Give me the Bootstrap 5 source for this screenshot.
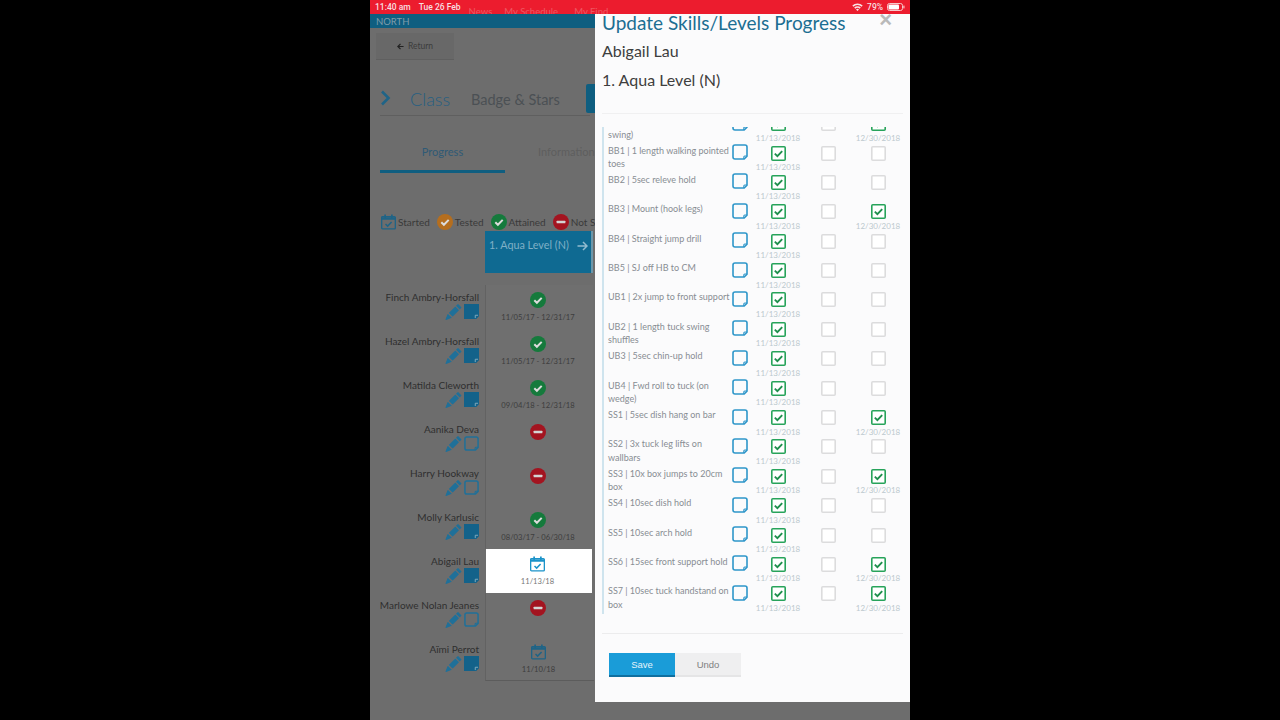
<!DOCTYPE html>
<html lang="en">
<head>
    <meta charset="UTF-8">
    <meta name="viewport" content="width=device-width, initial-scale=1.0">
    <title>Update Skills/Levels Progress</title>
    <link rel="stylesheet" href="https://cdn.jsdelivr.net/npm/bootstrap@5.3.0/dist/css/bootstrap.min.css">
    <script src="https://cdn.jsdelivr.net/npm/bootstrap@5.3.0/dist/js/bootstrap.bundle.min.js"></script>
    <style>
        html, body { height: 720px; overflow: hidden; background: #000; }
        body { font-family: Lato, "Liberation Sans", sans-serif; }
        .tablet { width: 540px; height: 720px; background: #6d6d6d; overflow: hidden; }

        .status-bar { height: 14px; background: #ec1c2e; color: #f7dfe0; font: 500 8.5px/14px Roboto, sans-serif; padding: 0 5px; }
        .status-ghost { color: #ee5560; font-family: Lato, sans-serif; font-size: 9.5px; line-height: 24px; height: 14px; overflow: hidden; }
        .north-bar { height: 14px; background: #0f5e80; color: #7f9dab; font-size: 9.5px; line-height: 15px; padding-left: 6px; }

        .return-btn { width: 78px; height: 27px; margin: 5px 0 0 6px; background: #686868; border-bottom: 1px solid #5f5f5f; color: #333; font-size: 8.5px; }
        .return-btn span { color: #3c3c3c; }
        .class-row { width: 210px; height: 32px; margin: 24px 0 0 10px; border-bottom: 1px solid #5f5f5f; }
        .class-title { font-size: 18px; font-weight: 300; color: #265f82; width: 61px; margin-left: 19px; }
        .class-sub { font-size: 14.5px; color: #4b5054; white-space: nowrap; }
        .blue-tab { position: absolute; left: 216px; top: 84px; width: 20px; height: 29px; background: #0f5e80; border-radius: 2px; }
        .tab-row { width: 215px; height: 29px; margin: 28px 0 0 10px; font-size: 11px; line-height: 15px; }
        .tab-active { width: 125px; height: 29px; text-align: center; color: #2f5a76; border-bottom: 3px solid #0f5e80; }
        .tab-other { color: #5e5e5e; margin-left: 33px; white-space: nowrap; }
        .legend { height: 17px; margin: 40px 0 1px 11px; font-size: 10px; color: #3a3a3a; white-space: nowrap; }
        .legend-text { margin: 2px 7px 0 2px; }

        .level-head { width: 108px; height: 42px; margin-left: 115px; background: #0f6a92; color: #7fb0c6; font-size: 10.8px; padding: 6px 0 0 4px; white-space: nowrap; border-right: 2px solid #6d97aa; }
        .student-table { margin-top: 12px; }
        .student-row { height: 44px; }
        .student-name { width: 115px; padding: 5px 6px 0 0; text-align: right; color: #2f2f2f; font-size: 10px; line-height: 14px; white-space: nowrap; }
        .student-tools { gap: 2px; }
        .student-cell { width: 108px; text-align: center; color: #3d3d3d; font-size: 7.6px; padding: 7px 3px 0 0; line-height: 10px; background: #6f6f6f; border-left: 1px solid #626262; }
        .student-cell svg { display: block; margin: 0 auto 4px; }
        .student-cell.current { background: #fff; color: #777; margin-left: 1px; width: 106px; border-left: 0; }
        .student-last { border-bottom: 1px solid #5c5c5c; width: 109px; }

        .skills-modal { position: absolute; left: 225px; top: 14px; width: 315px; height: 688px; background: #fbfbfc; padding: 0 7px; }
        .close-x { position: absolute; right: 18px; top: -5px; color: #b9b9b9; font-size: 22px; font-weight: 700; line-height: 1; font-family: "Liberation Sans", sans-serif; }
        .modal-title-text { color: #1c6e92; font-size: 19px; line-height: 18px; margin: 0; font-weight: 400; white-space: nowrap; }
        .modal-name { color: #3e3e3e; font-size: 16px; line-height: 20px; margin: 9px 0 0; }
        .top-rule { height: 1px; background: #f0f0f1; margin-top: 23px; }
        .skill-list { height: 487px; margin-top: 13px; overflow: hidden; border-left: 2px solid #cfe4ee; padding-left: 4px; }
        .skill-inner { margin-top: -14.4px; }
        .skill-row { height: 29.4px; }
        .skill-label { width: 124px; color: #888d93; font-size: 9px; line-height: 13.5px; padding-top: 1.5px; }
        /* first row is scrolled, only its second line shows */
        .skill-row:first-child .skill-label { padding-top: 15px; }
        .note-col { width: 17px; margin: 2px 4px 0 0; }
        .note-col svg { display: block; }
        .tick-col { width: 50px; position: relative; padding-top: 3.5px; }
        .tick-col svg { display: block; margin: 0 auto; }
        .tick-date { position: absolute; left: 0; right: 0; top: 20px; text-align: center; color: #bcc9ce; font-size: 8px; line-height: 10px; }
        .bottom-rule { height: 1px; background: #ececed; margin-top: 19px; }
        .btn-save, .btn-undo { width: 66px; height: 24px; font-size: 9.5px; line-height: 21px; padding: 0; border: 0; border-radius: 0; font-family: "Liberation Sans", sans-serif; }
        .btn-save { background: #1a9cd8; color: #e4f3fa; border-bottom: 2px solid #0f6f9f; }
        .btn-undo { background: #efeff0; color: #808080; border-bottom: 2px solid #e5e5e6; }
        .btn-group-wrap { margin: 19px 0 0 7px; }
    </style>
</head>
<body>
<svg width="0" height="0" class="d-block">
    <symbol id="i-pencil" viewBox="0 0 16 16">
        <path d="M12.854.146a.5.5 0 0 0-.707 0L10.5 1.793 14.207 5.5l1.647-1.646a.5.5 0 0 0 0-.708l-3-3zm.646 6.061L9.793 2.5 3.293 9H3.5a.5.5 0 0 1 .5.5v.5h.5a.5.5 0 0 1 .5.5v.5h.5a.5.5 0 0 1 .5.5v.5h.5a.5.5 0 0 1 .5.5v.207l6.5-6.5zm-7.468 7.468A.5.5 0 0 1 6 13.5V13h-.5a.5.5 0 0 1-.5-.5V12h-.5a.5.5 0 0 1-.5-.5V11h-.5a.5.5 0 0 1-.5-.5V10h-.5a.499.499 0 0 1-.175-.032l-.179.178a.5.5 0 0 0-.11.168l-2 5a.5.5 0 0 0 .65.65l5-2a.5.5 0 0 0 .168-.11l.178-.178z"/>
    </symbol>
    <symbol id="i-note-fill" viewBox="0 0 16 16">
        <path d="M0 0h16v13l-3 3H0z"/><path d="M12 15v-3h3" fill="none" stroke="#86acbe" stroke-width="1"/>
    </symbol>
    <symbol id="i-note" viewBox="0 0 16 16">
        <path d="M3 1h10a2 2 0 0 1 2 2v9.2L12.2 15H3a2 2 0 0 1-2-2V3a2 2 0 0 1 2-2z" fill="none" stroke="currentColor" stroke-width="1.6"/>
        <path d="M11.8 15v-2a1 1 0 0 1 1-1H15" fill="none" stroke="currentColor" stroke-width="1.1"/>
    </symbol>
    <symbol id="i-cal" viewBox="0 0 16 16">
        <rect x=".7" y="2.2" width="14.6" height="13.1" rx="1" fill="none" stroke="currentColor" stroke-width="1.4"/>
        <path d="M.7 3h14.6v2.6H.7zM3.5 0h1.8v3H3.5zM10.7 0h1.8v3h-1.8z" fill="currentColor"/>
        <path d="M4.8 10.2l2.3 2.2 4.2-4.3" fill="none" stroke="currentColor" stroke-width="1.6"/>
    </symbol>
    <symbol id="i-check" viewBox="0 0 16 16">
        <circle cx="8" cy="8" r="8" fill="currentColor"/>
        <path d="M4.3 8.2l2.6 2.6 4.8-4.9" fill="none" stroke="#dcdcdc" stroke-width="2"/>
    </symbol>
    <symbol id="i-stop" viewBox="0 0 16 16">
        <circle cx="8" cy="8" r="8" fill="currentColor"/>
        <rect x="3.6" y="6.7" width="8.8" height="2.6" rx=".6" fill="#d4d4d4"/>
    </symbol>
    <symbol id="i-box-on" viewBox="0 0 15 15">
        <rect x=".8" y=".8" width="13.4" height="13.4" rx="1" fill="#fff" stroke="#27a35a" stroke-width="1.6"/>
        <path d="M3.8 7.6l2.6 2.5 4.8-5" fill="none" stroke="#1f8f4d" stroke-width="1.9"/>
    </symbol>
    <symbol id="i-box-off" viewBox="0 0 15 15">
        <rect x=".8" y=".8" width="13.4" height="13.4" rx="1" fill="#fff" stroke="#dcdcdd" stroke-width="1.6"/>
    </symbol>
</svg>

<div class="d-flex justify-content-center">
    <div class="tablet position-relative">
        <div class="status-bar d-flex justify-content-between">
            <div class="d-flex gap-2 text-nowrap">
                <span>11:40 am</span><span>Tue 26 Feb</span>
                <span class="status-ghost">News</span>
                <span class="status-ghost ms-1">My Schedule</span>
                <span class="status-ghost ms-2">My Find</span>
            </div>
            <div class="d-flex align-items-center gap-1">
                <svg width="11" height="8" viewBox="0 0 11 8"><path d="M.3 2.6a7.4 7.4 0 0 1 10.4 0L9.6 3.8a5.8 5.8 0 0 0-8.2 0zM2.2 4.6a4.7 4.7 0 0 1 6.6 0L7.7 5.7a3.2 3.2 0 0 0-4.4 0zM4 6.4a2.1 2.1 0 0 1 3 0L5.5 8z" fill="#f7e6e7"/></svg>
                <span>79%</span>
                <svg width="18" height="8" viewBox="0 0 18 8"><rect x=".5" y=".5" width="15" height="7" rx="2" fill="none" stroke="#f7c7ca"/><rect x="1.5" y="1.5" width="10.5" height="5" rx="1" fill="#fff"/><rect x="16.3" y="2.6" width="1.2" height="2.8" fill="#f7c7ca"/></svg>
            </div>
        </div>
        <div class="north-bar">NORTH</div>

        <div class="return-btn d-flex align-items-center justify-content-center gap-1">
            <svg width="7" height="7" viewBox="0 0 8 8"><path d="M7.5 4H1.5M4 1L1 4l3 3" fill="none" stroke="#222" stroke-width="1.4"/></svg>
            <span>Return</span>
        </div>

        <div class="class-row d-flex align-items-center">
            <svg width="11" height="16" viewBox="0 0 11 16" class="mb-1"><path d="M2 1.5L8.5 8 2 14.5" fill="none" stroke="#1f6487" stroke-width="2.6"/></svg>
            <div class="class-title">Class</div>
            <div class="class-sub">Badge &amp; Stars</div>
        </div>
        <div class="blue-tab"></div>

        <div class="tab-row d-flex">
            <div class="tab-active">Progress</div>
            <div class="tab-other">Information</div>
        </div>

        <div class="legend d-flex align-items-center">
            <svg width="15" height="16" style="color:#1f6487"><use href="#i-cal"/></svg><span class="legend-text">Started</span>
            <svg width="16" height="16" style="color:#b56e1e"><use href="#i-check"/></svg><span class="legend-text">Tested</span>
            <svg width="16" height="16" style="color:#157a3c"><use href="#i-check"/></svg><span class="legend-text">Attained</span>
            <svg width="16" height="16" style="color:#a31420"><use href="#i-stop"/></svg><span class="legend-text">Not Started</span>
        </div>

        <div class="level-head d-flex gap-2">
            <span>1. Aqua Level (N)</span>
            <svg width="11" height="10" viewBox="0 0 11 10" class="mt-1"><path d="M.5 5h9M6 1l4 4-4 4" fill="none" stroke="#93bccf" stroke-width="1.5"/></svg>
        </div>

        <div class="student-table" id="students"></div>

        <div class="skills-modal">
            <div class="close-x">&times;</div>
            <h5 class="modal-title-text">Update Skills/Levels Progress</h5>
            <p class="modal-name">Abigail Lau</p>
            <p class="modal-name">1. Aqua Level (N)</p>
            <div class="top-rule"></div>
            <div class="skill-list">
                <div class="skill-inner" id="skills"></div>
            </div>
            <div class="bottom-rule"></div>
            <div class="btn-group-wrap d-flex">
                <button class="btn-save" type="button">Save</button>
                <button class="btn-undo" type="button">Undo</button>
            </div>
        </div>
    </div>
</div>

<script>
    // students behind the modal
    const students = [
        ['Finch Ambry-Horsfall', 'ok', '11/05/17 - 12/31/17', 1],
        ['Hazel Ambry-Horsfall', 'ok', '11/05/17 - 12/31/17', 1],
        ['Matilda Cleworth', 'ok', '09/04/18 - 12/31/18', 1],
        ['Aanika Deva', 'no', '', 0],
        ['Harry Hookway', 'no', '', 0],
        ['Molly Karlusic', 'ok', '08/03/17 - 06/30/18', 1],
        ['Abigail Lau', 'cal', '11/13/18', 1, 'current'],
        ['Marlowe Nolan Jeanes', 'no', '', 0],
        ['A\u00efmi Perrot', 'cal', '11/10/18', 1]
    ];
    const statusIcon = {
        ok: '<svg width="16" height="16" style="color:#157a3c"><use href="#i-check"/></svg>',
        no: '<svg width="16" height="16" style="color:#a31420"><use href="#i-stop"/></svg>',
        cal: '<svg width="15" height="16" style="color:#1f6487"><use href="#i-cal"/></svg>'
    };
    document.getElementById('students').innerHTML = students.map((s, i) => {
        const calColor = s[4] ? statusIcon.cal.replace('#1f6487', '#1b93c9') : statusIcon[s[1]];
        const last = i === students.length - 1 ? ' student-last' : '';
        return `<div class="student-row d-flex">
            <div class="student-name">${s[0]}
                <div class="student-tools d-flex justify-content-end mt-0">
                    <svg width="17" height="16" fill="#1f7099"><use href="#i-pencil"/></svg>
                    <svg width="15" height="15" style="color:#1f7099" fill="#13628a"><use href="${s[3] ? '#i-note-fill' : '#i-note'}"/></svg>
                </div>
            </div>
            <div class="student-cell ${s[4] || ''}${last}">${calColor}${s[2]}</div>
        </div>`;
    }).join('');

    // skill rows: label, dates for attained columns (col 2 always, col 4 sometimes)
    const skills = [
        ['swing)', 1], ['BB1 | 1 length walking pointed toes', 0], ['BB2 | 5sec releve hold', 0],
        ['BB3 | Mount (hook legs)', 1], ['BB4 | Straight jump drill', 0], ['BB5 | SJ off HB to CM', 0],
        ['UB1 | 2x jump to front support', 0], ['UB2 | 1 length tuck swing shuffles', 0], ['UB3 | 5sec chin-up hold', 0],
        ['UB4 | Fwd roll to tuck (on wedge)', 0], ['SS1 | 5sec dish hang on bar', 1], ['SS2 | 3x tuck leg lifts on wallbars', 0],
        ['SS3 | 10x box jumps to 20cm box', 1], ['SS4 | 10sec dish hold', 0], ['SS5 | 10sec arch hold', 0],
        ['SS6 | 15sec front support hold', 1], ['SS7 | 10sec tuck handstand on box', 1]
    ];
    const tick = (on, date) => `<div class="tick-col">
        <svg width="15" height="15"><use href="${on ? '#i-box-on' : '#i-box-off'}"/></svg>
        ${on ? `<div class="tick-date">${date}</div>` : ''}
    </div>`;
    document.getElementById('skills').innerHTML = skills.map(s => `<div class="skill-row d-flex">
        <div class="skill-label">${s[0]}</div>
        <div class="note-col"><svg width="16" height="16" style="color:#2e96c9"><use href="#i-note"/></svg></div>
        ${tick(1, '11/13/2018')}${tick(0)}${tick(s[1], '12/30/2018')}
    </div>`).join('');
</script>
</body>
</html>
